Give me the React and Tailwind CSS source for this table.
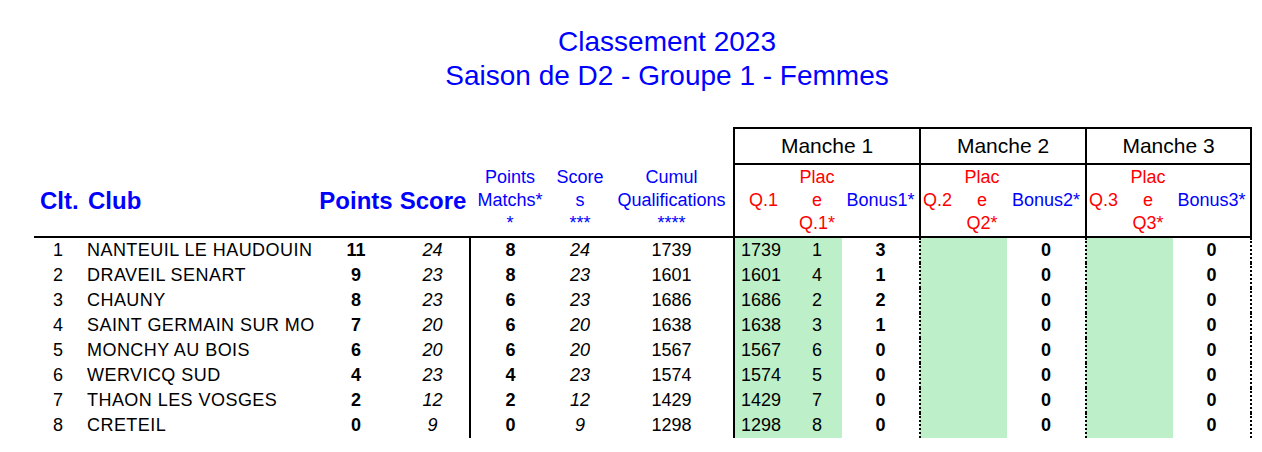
const rows = [
  [1, 'NANTEUIL LE HAUDOUIN', 11, 24, 8, 24, 1739, 1739, 1, 3],
  [2, 'DRAVEIL SENART', 9, 23, 8, 23, 1601, 1601, 4, 1],
  [3, 'CHAUNY', 8, 23, 6, 23, 1686, 1686, 2, 2],
  [4, 'SAINT GERMAIN SUR MO', 7, 20, 6, 20, 1638, 1638, 3, 1],
  [5, 'MONCHY AU BOIS', 6, 20, 6, 20, 1567, 1567, 6, 0],
  [6, 'WERVICQ SUD', 4, 23, 4, 23, 1574, 1574, 5, 0],
  [7, 'THAON LES VOSGES', 2, 12, 2, 12, 1429, 1429, 7, 0],
  [8, 'CRETEIL', 0, 9, 0, 9, 1298, 1298, 8, 0],
];

const widths = [48, 234, 80, 74, 80, 60, 124, 58, 50, 78, 37, 50, 79, 37, 50, 78];

function PlaceHead({ q }) {
  return (
    <th className="p-0 text-center font-normal text-[#ff0000] border-b-2 border-black">
      Plac<br />e<br />{q}
    </th>
  );
}

export default function App() {
  return (
    <div className="w-[1262px] h-[452px] bg-white text-black font-['Liberation_Sans',Arial,sans-serif]">
      {/* Titles */}
      <div className="pt-[25px] pl-[72px] text-center text-[28px] leading-[34px] text-[#0000ff]">
        <div>Classement 2023</div>
        <div>Saison de D2 - Groupe 1 - Femmes</div>
      </div>

      <table className="ml-[34px] mt-[34px] table-fixed border-collapse w-[1217px] text-[18px]">
        <colgroup>
          {widths.map((w, i) => (
            <col key={i} style={{ width: w }} />
          ))}
        </colgroup>
        <thead>
          {/* Manche row */}
          <tr className="h-[36px]">
            <th colSpan={7} className="p-0" />
            <th colSpan={3} className="p-0 text-[21px] font-normal text-center border-2 border-black border-b-dotted">
              Manche 1
            </th>
            <th colSpan={3} className="p-0 text-[21px] font-normal text-center border-2 border-black border-b-dotted">
              Manche 2
            </th>
            <th colSpan={3} className="p-0 text-[21px] font-normal text-center border-2 border-black border-b-dotted">
              Manche 3
            </th>
          </tr>
          {/* Column titles */}
          <tr className="h-[73px] leading-[23px] text-[#0000ff]">
            <th className="p-0 pl-[6px] text-left text-[24px] font-bold border-b-2 border-black">Clt.</th>
            <th className="p-0 pl-[6px] text-left text-[24px] font-bold border-b-2 border-black">Club</th>
            <th className="p-0 text-center text-[24px] font-bold border-b-2 border-black">Points</th>
            <th className="p-0 text-center text-[24px] font-bold border-b-2 border-black whitespace-nowrap">Score</th>
            <th className="p-0 text-center font-normal border-b-2 border-black">
              Points<br />Matchs*<br />*
            </th>
            <th className="p-0 text-center font-normal border-b-2 border-black">
              Score<br />s<br />***
            </th>
            <th className="p-0 text-center font-normal border-b-2 border-black">
              Cumul<br />Qualifications<br />****
            </th>
            <th className="p-0 text-center font-normal text-[#ff0000] border-l-2 border-b-2 border-black">Q.1</th>
            <PlaceHead q="Q.1*" />
            <th className="p-0 text-center font-normal border-r-2 border-b-2 border-black whitespace-nowrap">Bonus1*</th>
            <th className="p-0 pl-[2px] text-left font-normal text-[#ff0000] border-b-2 border-black">Q.2</th>
            <PlaceHead q="Q2*" />
            <th className="p-0 text-center font-normal border-r-2 border-b-2 border-black whitespace-nowrap">Bonus2*</th>
            <th className="p-0 pl-[2px] text-left font-normal text-[#ff0000] border-b-2 border-black">Q.3</th>
            <PlaceHead q="Q3*" />
            <th className="p-0 text-center font-normal border-r-2 border-b-2 border-black whitespace-nowrap">Bonus3*</th>
          </tr>
        </thead>
        <tbody>
          {rows.map(([rank, club, pts, score, pm, sc, cumul, q1, place, bonus]) => (
            <tr key={rank} className="h-[25px] leading-[25px]">
              <td className="p-0 text-center">{rank}</td>
              <td className="p-0 pl-[5px] tracking-[0.45px] whitespace-nowrap overflow-hidden">{club}</td>
              <td className="p-0 text-center font-bold">{pts}</td>
              <td className="p-0 text-center italic">{score}</td>
              <td className="p-0 text-center font-bold border-l-2 border-black">{pm}</td>
              <td className="p-0 text-center italic">{sc}</td>
              <td className="p-0 text-center">{cumul}</td>
              <td className="p-0 pl-[6px] bg-[#bdf0c8] border-l-2 border-black">{q1}</td>
              <td className="p-0 text-center bg-[#bdf0c8]">{place}</td>
              <td className="p-0 text-center font-bold border-r-2 border-dotted border-black">{bonus}</td>
              <td className="p-0 bg-[#bdf0c8]" />
              <td className="p-0 bg-[#bdf0c8]" />
              <td className="p-0 text-center font-bold border-r-2 border-dotted border-black">0</td>
              <td className="p-0 bg-[#bdf0c8]" />
              <td className="p-0 bg-[#bdf0c8]" />
              <td className="p-0 text-center font-bold border-r-2 border-dotted border-black">0</td>
            </tr>
          ))}
        </tbody>
      </table>
    </div>
  );
}
